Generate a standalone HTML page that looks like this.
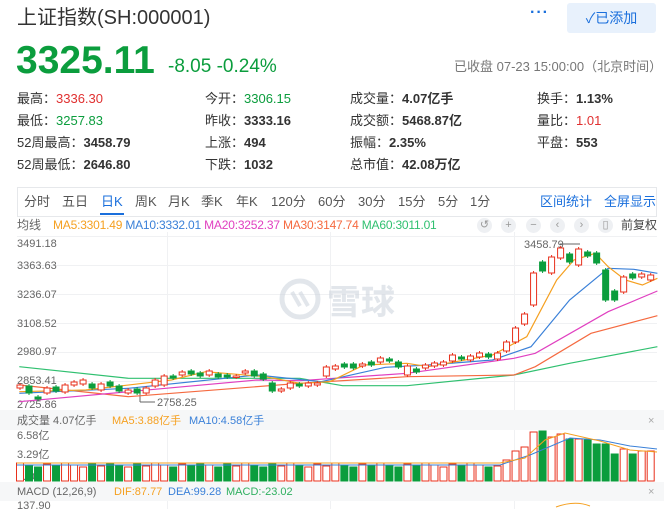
<!DOCTYPE html>
<html><head><meta charset="utf-8">
<style>
*{margin:0;padding:0;box-sizing:border-box}
body{width:664px;height:509px;background:#fff;font-family:"Liberation Sans","Noto Sans CJK SC",sans-serif;color:#333;position:relative;overflow:hidden}
.a{position:absolute;white-space:nowrap}
.st{font-size:13px;line-height:16px}
.st b{font-weight:bold;color:#333}
.tab{position:absolute;top:194px;font-size:13px;color:#555;line-height:16px}
.ic{position:absolute;top:218px;width:15px;height:15px;border-radius:50%;background:#eef0f3;color:#999;font-size:11px;line-height:15px;text-align:center}
</style></head><body>
<div class="a" style="left:17px;top:6px;font-size:20px;line-height:24px;color:#333">上证指数(SH:000001)</div>
<div class="a" style="left:530px;top:4px;font-size:16px;color:#1a6fdc;font-weight:bold;letter-spacing:1px">···</div>
<div class="a" style="left:567px;top:3px;width:89px;height:30px;background:#e8f1fc;border-radius:3px;color:#1a6fdc;font-size:14px;line-height:30px;text-align:center">✓已添加</div>
<div class="a" style="left:16px;top:38px;font-size:39px;line-height:46px;font-weight:bold;color:#0b9d3d">3325.11</div>
<div class="a" style="left:168px;top:56px;font-size:19px;line-height:22px;color:#0b9d3d">-8.05 -0.24%</div>
<div class="a" style="left:454px;top:59px;font-size:13px;line-height:16px;color:#777">已收盘 07-23 15:00:00（北京时间）</div>

<div class="a st" style="left:17px;top:91px">最高：<span style="color:#e03030">3336.30</span></div>
<div class="a st" style="left:17px;top:113px">最低：<span style="color:#0b9d3d">3257.83</span></div>
<div class="a st" style="left:17px;top:135px">52周最高：<b>3458.79</b></div>
<div class="a st" style="left:17px;top:157px">52周最低：<b>2646.80</b></div>
<div class="a st" style="left:205px;top:91px">今开：<span style="color:#0b9d3d">3306.15</span></div>
<div class="a st" style="left:205px;top:113px">昨收：<b>3333.16</b></div>
<div class="a st" style="left:205px;top:135px">上涨：<b>494</b></div>
<div class="a st" style="left:205px;top:157px">下跌：<b>1032</b></div>
<div class="a st" style="left:350px;top:91px">成交量：<b>4.07亿手</b></div>
<div class="a st" style="left:350px;top:113px">成交额：<b>5468.87亿</b></div>
<div class="a st" style="left:350px;top:135px">振幅：<b>2.35%</b></div>
<div class="a st" style="left:350px;top:157px">总市值：<b>42.08万亿</b></div>
<div class="a st" style="left:537px;top:91px">换手：<b>1.13%</b></div>
<div class="a st" style="left:537px;top:113px">量比：<span style="color:#e03030">1.01</span></div>
<div class="a st" style="left:537px;top:135px">平盘：<b>553</b></div>

<div class="a" style="left:17px;top:187px;width:640px;height:30px;border:1px solid #e6e8eb"></div>
<div class="tab" style="left:24px">分时</div><div class="tab" style="left:62px">五日</div>
<div class="tab" style="left:101px;color:#1a6fdc">日K</div>
<div class="a" style="left:100px;top:213px;width:24px;height:2px;background:#1a6fdc"></div>
<div class="tab" style="left:135px">周K</div><div class="tab" style="left:168px">月K</div><div class="tab" style="left:201px">季K</div><div class="tab" style="left:236px">年K</div>
<div class="tab" style="left:271px">120分</div><div class="tab" style="left:318px">60分</div><div class="tab" style="left:358px">30分</div><div class="tab" style="left:398px">15分</div><div class="tab" style="left:438px">5分</div><div class="tab" style="left:470px">1分</div>
<div class="tab" style="left:540px;color:#1a6fdc">区间统计</div><div class="tab" style="left:604px;color:#1a6fdc">全屏显示</div>

<div class="a" style="left:17px;top:218px;font-size:12px;line-height:14px;color:#666">均线</div>
<div class="a" style="left:53px;top:218px;font-size:12px;line-height:14px;letter-spacing:-0.2px"><span style="color:#f5a020">MA5:3301.49</span> <span style="color:#3a80d8">MA10:3332.01</span> <span style="color:#e040c0">MA20:3252.37</span> <span style="color:#f56a40">MA30:3147.74</span> <span style="color:#30c070">MA60:3011.01</span></div>
<div class="ic" style="left:477px">↺</div><div class="ic" style="left:501px">+</div><div class="ic" style="left:526px">−</div><div class="ic" style="left:550px">‹</div><div class="ic" style="left:574px">›</div><div class="ic" style="left:598px">▯</div>
<div class="a" style="left:621px;top:218px;font-size:12px;line-height:14px;color:#444">前复权</div>

<svg class="a" style="left:0;top:0" width="664" height="509" id="ch">
<g stroke="#f0f1f3" stroke-width="1">
<line x1="17" y1="236.5" x2="657" y2="236.5"/><line x1="17" y1="265.5" x2="657" y2="265.5"/><line x1="17" y1="294.5" x2="657" y2="294.5"/><line x1="17" y1="323.5" x2="657" y2="323.5"/><line x1="17" y1="352.5" x2="657" y2="352.5"/><line x1="17" y1="381.5" x2="657" y2="381.5"/>
<line x1="167.5" y1="232" x2="167.5" y2="509"/><line x1="330.5" y1="232" x2="330.5" y2="509"/><line x1="514.5" y1="232" x2="514.5" y2="509"/>
</g>
<rect x="0" y="410" width="664" height="20" fill="#f6f7f8"/>
<rect x="0" y="482" width="664" height="19" fill="#f6f7f8"/>
<g font-size="11" fill="#666" font-family="Liberation Sans,sans-serif">
<text x="17" y="247">3491.18</text><text x="17" y="269">3363.63</text><text x="17" y="298">3236.07</text><text x="17" y="327">3108.52</text><text x="17" y="355">2980.97</text><text x="17" y="384">2853.41</text><text x="17" y="408">2725.86</text>
<text x="17" y="439">6.58亿</text><text x="17" y="458">3.29亿</text><text x="17" y="480">0.00</text><text x="17" y="509">137.90</text>
<text x="524" y="248">3458.79</text><text x="157" y="406">2758.25</text>
</g>
<g font-size="11" font-family="Liberation Sans,'Noto Sans CJK SC',sans-serif">
<text x="17" y="424" fill="#666">成交量 4.07亿手</text><text x="112" y="424" fill="#f5a020">MA5:3.88亿手</text><text x="189" y="424" fill="#3a80d8">MA10:4.58亿手</text>
<text x="17" y="495" fill="#666">MACD (12,26,9)</text><text x="114" y="495" fill="#f5a020">DIF:87.77</text><text x="168" y="495" fill="#3a80d8">DEA:99.28</text><text x="226" y="495" fill="#30b060">MACD:-23.02</text>
<text x="648" y="424" fill="#aaa">×</text><text x="648" y="495" fill="#aaa">×</text>
</g>
<line x1="140" y1="391" x2="140" y2="402" stroke="#666"/><line x1="140" y1="402" x2="155" y2="402" stroke="#666"/>
<line x1="560" y1="244" x2="580" y2="244" stroke="#666"/>
<g opacity="0.6">
<circle cx="300" cy="299" r="18" fill="none" stroke="#cfd6df" stroke-width="5"/>
<path d="M292 292 L300 306 M300 292 L308 306" stroke="#cfd6df" stroke-width="4" fill="none"/>
<text x="327" y="314" font-size="34" font-weight="bold" fill="#cfd6df" font-family="'Noto Sans CJK SC',sans-serif">雪球</text>
</g>
<g id="ma"></g><g id="cd"></g><g id="vol"></g>
<path d="M556 507 Q575 500 590 506" fill="none" stroke="#f5a020"/>
</svg>
<script>
var C=[[385,388,'r'],[386,393,'g'],[397,399,'g'],[388,393,'r'],[387,391,'g'],[385,392,'r'],[382,385,'r'],[380,384,'r'],[384,388,'g'],[384,390,'r'],[382,386,'g'],[386,391,'g'],[390,393,'r'],[389,393,'g'],[388,393,'r'],[380,386,'r'],[376,385,'r'],[376,378,'g'],[372,375,'r'],[371,374,'g'],[373,376,'g'],[371,375,'r'],[374,377,'g'],[375,377,'g'],[376,377,'r'],[371,373,'r'],[371,376,'g'],[374,379,'g'],[383,391,'g'],[389,391,'r'],[383,388,'r'],[384,386,'g'],[383,386,'r'],[383,385,'r'],[367,376,'r'],[366,369,'r'],[364,367,'g'],[364,368,'g'],[364,366,'r'],[362,365,'g'],[358,362,'r'],[359,361,'g'],[362,367,'g'],[366,375,'r'],[369,372,'g'],[365,368,'r'],[363,366,'r'],[362,365,'r'],[355,361,'r'],[357,359,'g'],[356,360,'r'],[353,357,'r'],[354,357,'g'],[353,359,'r'],[342,351,'r'],[328,342,'r'],[314,324,'r'],[273,305,'r'],[262,271,'g'],[257,273,'r'],[248,258,'r'],[254,262,'g'],[249,265,'r'],[252,256,'g'],[253,263,'g'],[270,300,'g'],[291,300,'g'],[277,292,'r'],[274,278,'g'],[274,277,'r'],[275,280,'r']];
var V={53:466,54:460,55:451,56:447,57:432,58:431,59:437,60:434,61:439,62:439,63:440,64:444,65:444,66:454,67:449,68:454,69:451,70:451};
var R='#e8301c',G='#0b9d3d',s='',v='';
for(var i=0;i<C.length;i++){var x=20+i*9.01,c=C[i],col=c[2]=='r'?R:G;
s+='<line x1="'+x+'" y1="'+(c[0]-2)+'" x2="'+x+'" y2="'+(c[1]+2)+'" stroke="'+col+'"/>';
var h=Math.max(c[1]-c[0],1.5);
s+='<rect x="'+(x-3)+'" y="'+c[0]+'" width="6" height="'+h+'" fill="'+(c[2]=='r'?'#fff':G)+'" stroke="'+col+'" stroke-width="1"/>';
var t=V[i]||(463+((i*7)%5));
v+='<rect x="'+(x-3.5)+'" y="'+t+'" width="7" height="'+(481-t)+'" fill="'+(c[2]=='r'?'#fff':G)+'" stroke="'+col+'" stroke-width="1"/>';}
document.getElementById('cd').innerHTML=s;document.getElementById('vol').innerHTML=v;
function P(z){return z.map(function(p){return (p[0]/2.335).toFixed(1)+','+(p[1]/3+230).toFixed(1)}).join(' ')}
var L=[['#30c070',[[45,410],[300,445],[700,445],[800,467],[950,467],[1200,435],[1330,400],[1535,350]]],
['#f56a40',[[45,465],[300,500],[700,460],[950,440],[1200,435],[1250,410],[1380,310],[1535,257]]],
['#e040c0',[[45,515],[300,485],[600,450],[700,452],[950,430],[1200,385],[1250,370],[1420,245],[1535,183]]],
['#3a80d8',[[45,490],[300,475],[600,435],[750,455],[900,412],[1000,405],[1150,390],[1240,350],[1330,210],[1420,115],[1480,118],[1535,130]]],
['#f5a020',[[45,485],[200,480],[400,450],[480,425],[620,440],[700,460],[770,455],[850,405],[950,400],[1000,410],[1150,375],[1230,320],[1300,150],[1340,90],[1390,70],[1420,110],[1460,150],[1500,165],[1535,145]]]];
var m='';L.forEach(function(l){m+='<polyline fill="none" stroke="'+l[0]+'" stroke-width="1.2" points="'+P(l[1])+'"/>'});
var m2='<polyline fill="none" stroke="#3a80d8" points="17,465 500,465 530,455 570,438 600,440 630,446 657,449"/><polyline fill="none" stroke="#f5a020" points="17,463 500,463 525,458 545,440 565,433 600,441 630,450 657,452"/>';
document.getElementById('ma').innerHTML=m;document.getElementById('vol').innerHTML+=m2;
</script>
</body></html>
